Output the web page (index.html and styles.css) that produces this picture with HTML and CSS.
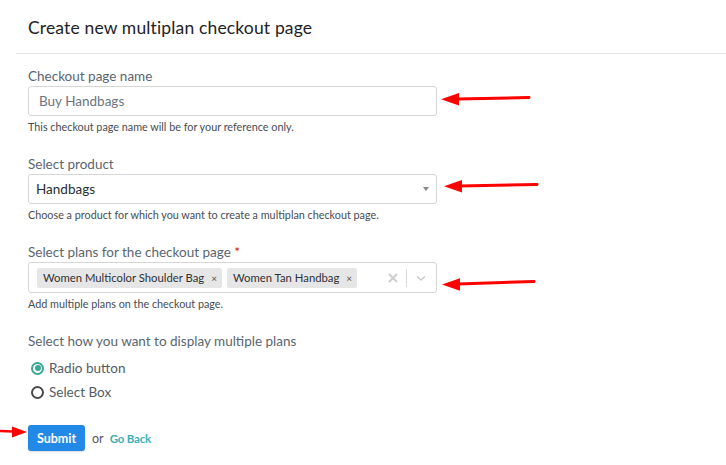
FILE: index.html
```html
<!DOCTYPE html>
<html>
<head>
<meta charset="utf-8">
<link rel="stylesheet" href="styles.css">
</head>
<body>
<div class="page">
  <div class="card">
    <div class="card-header"><h1 class="title">Create new multiplan checkout page</h1></div>
    <div class="card-body">
      <div class="field">
        <label class="label">Checkout page name</label>
        <div class="input">Buy Handbags</div>
        <div class="help">This checkout page name will be for your reference only.</div>
      </div>
      <div class="field">
        <label class="label">Select product</label>
        <div class="input select"><span class="sel-value">Handbags</span><span class="caret"></span></div>
        <div class="help">Choose a product for which you want to create a multiplan checkout page.</div>
      </div>
      <div class="field">
        <label class="label">Select plans for the checkout page <span class="req">*</span></label>
        <div class="input multi">
          <div class="chips">
            <span class="chip">Women Multicolor Shoulder Bag<span class="chip-x">×</span></span>
            <span class="chip">Women Tan Handbag<span class="chip-x">×</span></span>
          </div>
          <div class="indicators">
            <svg class="ind-clear" width="12" height="12" viewBox="0 0 12 12"><path d="M2 2L10 10M10 2L2 10" stroke="#cccccc" stroke-width="1.8" fill="none"/></svg>
            <span class="ind-sep"></span>
            <svg class="ind-chev" width="12" height="12" viewBox="0 0 12 12"><path d="M2 4.5L6 8L10 4.5" stroke="#cccccc" stroke-width="1.5" fill="none"/></svg>
          </div>
        </div>
        <div class="help">Add multiple plans on the checkout page.</div>
      </div>
      <div class="field">
        <label class="label">Select how you want to display multiple plans</label>
        <div class="radios">
          <div class="radio-row"><span class="radio checked"></span><span class="radio-label">Radio button</span></div>
          <div class="radio-row"><span class="radio"></span><span class="radio-label">Select Box</span></div>
        </div>
      </div>
      <div class="actions">
        <button class="btn">Submit</button>
        <span class="or">or</span>
        <a class="back">Go Back</a>
      </div>
    </div>
  </div>

  <svg class="arrow a1" width="100" height="16" viewBox="0 0 100 16"><line x1="16" y1="8" x2="88" y2="6.5" stroke="#ff0000" stroke-width="3" stroke-linecap="round"/><polygon points="0,8.3 18,2 18,14.5" fill="#ff0000"/></svg>
  <svg class="arrow a2" width="100" height="16" viewBox="0 0 100 16"><line x1="16" y1="8" x2="93" y2="6.5" stroke="#ff0000" stroke-width="3" stroke-linecap="round"/><polygon points="0,8.3 18,2 18,14.5" fill="#ff0000"/></svg>
  <svg class="arrow a3" width="100" height="16" viewBox="0 0 100 16"><line x1="16" y1="8" x2="92" y2="5.5" stroke="#ff0000" stroke-width="3" stroke-linecap="round"/><polygon points="0,8.5 18,2.2 18,14.7" fill="#ff0000"/></svg>
  <svg class="arrow a4" width="30" height="14" viewBox="0 0 30 14"><line x1="0" y1="6" x2="14" y2="6.5" stroke="#ff0000" stroke-width="2.5"/><polygon points="27,7 12,1.5 12,12.5" fill="#ff0000"/></svg>
</div>
</body>
</html>
```
FILE: styles.css
```css
* { box-sizing: border-box; }
html, body { margin: 0; padding: 0; background: #ffffff; }
body { font-family: Lato, "Noto Sans", "Liberation Sans", sans-serif; }
.page { position: relative; width: 726px; height: 465px; padding-left: 16px; overflow: hidden; }
.card { width: 710px; }
.card-header { height: 54px; border-bottom: 1px solid #e4e4e4; padding: 16px 12px 0; }
.title { margin: 0; font-size: 17.5px; line-height: 24px; font-weight: 400; color: #1e2226; letter-spacing: 0.15px; }
.card-body { padding: 13px 12px 0; }
.field { margin-bottom: 21px; }
.label { display: block; font-size: 13.5px; line-height: 18px; color: #5a6570; margin-bottom: 1px; }
.req { color: #d0021b; }
.input { width: 409px; height: 30px; border: 1px solid #d6d6d6; border-radius: 3px; padding: 0 10px; font-size: 13.5px; line-height: 28px; color: #6b7580; background: #fff; }
.select { display: flex; align-items: center; justify-content: space-between; padding: 0 6px 0 7px; color: #2a2e32; }
.caret { width: 0; height: 0; border-left: 3px solid transparent; border-right: 3px solid transparent; border-top: 4px solid #888; margin-right: 1px; }
.multi { height: 31px; display: flex; align-items: center; justify-content: space-between; padding: 0 6px 0 8px; }
.chips { display: flex; gap: 5px; }
.chip { display: inline-flex; align-items: center; height: 20px; background: #e6e6e6; border-radius: 2px; font-size: 11.3px; line-height: 20px; color: #2e3236; padding: 0 5px 0 6px; }
.chip-x { font-size: 10px; color: #555; margin-left: 7px; }
.indicators { display: flex; align-items: center; }
.ind-clear { margin-right: 7px; }
.ind-sep { width: 1px; height: 18px; background: #d9d9d9; margin-right: 8px; }
.ind-chev { margin-right: 3px; }
.help { margin-top: 4px; font-size: 10.8px; line-height: 14px; color: #474c52; }
.radios { margin-top: 6px; }
.radio-row { display: flex; align-items: center; height: 24px; padding-left: 3px; }
.radio { width: 13px; height: 13px; border-radius: 50%; border: 2px solid #4a4a4a; margin-right: 5px; position: relative; }
.radio.checked { border-color: #3aa796; }
.radio.checked::after { content: ""; position: absolute; left: 1.5px; top: 1.5px; width: 6px; height: 6px; border-radius: 50%; background: #3aa796; }
.radio-label { font-size: 13.5px; color: #555c63; }
.actions { display: flex; align-items: center; margin-top: 0px; }
.btn { height: 26px; width: 57px; border: none; border-radius: 3px; background: #2289e6; color: #fff; font-family: Lato, "Noto Sans", sans-serif; font-size: 12.5px; font-weight: 700; padding: 0; box-shadow: 0 1px 2px rgba(0,0,0,0.15); }
.or { margin-left: 7px; font-size: 12.5px; color: #555; }
.back { margin-left: 6px; font-size: 11.5px; font-weight: 700; color: #3bb0b8; letter-spacing: -0.2px; }
.arrow { position: absolute; }
.a1 { left: 441px; top: 91px; }
.a2 { left: 444px; top: 178px; }
.a3 { left: 442px; top: 276px; }
.a4 { left: 0px; top: 425px; }
```
